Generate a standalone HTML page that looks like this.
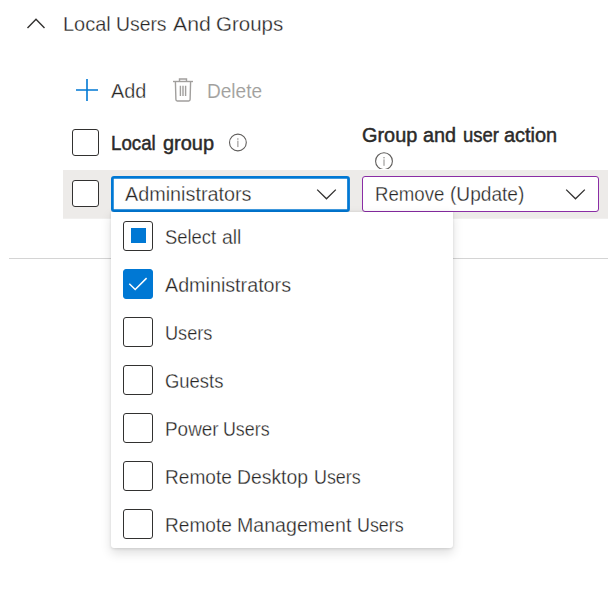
<!DOCTYPE html>
<html>
<head>
<meta charset="utf-8">
<title>Local Users And Groups</title>
<style>
html,body{margin:0;padding:0;background:#fff;}
body{width:608px;height:598px;position:relative;overflow:hidden;font-family:"Liberation Sans",sans-serif;color:#323130;}
.abs{position:absolute;}
.t{position:absolute;white-space:nowrap;transform-origin:0 50%;line-height:1;-webkit-text-stroke:0.3px #fff;color:#262524;}
.w{position:absolute;top:0;transform-origin:0 50%;display:block;}
.cb{position:absolute;box-sizing:border-box;border:1.5px solid #323130;border-radius:3px;background:#fff;}
.hcb{width:27px;height:27px;}
.lcb{width:30px;height:30px;left:123px;}
.row{position:absolute;left:63px;top:170px;width:545px;height:48px;background:#edebe9;border-bottom:1px solid #f1f0ef;}
.dd{position:absolute;box-sizing:border-box;height:36px;top:176px;background:#fff;border-radius:3px;}
.popup{position:absolute;left:111px;top:212px;width:342px;height:336px;background:#fff;border-radius:0 0 3px 3px;box-shadow:0 4.8px 10.8px rgba(0,0,0,.132),0 .9px 2.7px rgba(0,0,0,.108);}
.hr{position:absolute;left:9px;top:257.6px;width:599px;height:1px;background:#d4d4d4;}
.b{font-weight:normal;color:#2b2a29;-webkit-text-stroke:0.45px #2b2a29;}
</style>
</head>
<body>
<!-- title -->
<svg class="abs" style="left:24px;top:13px" width="24" height="20" viewBox="0 0 24 20"><path transform="translate(0,0.1)" d="M3.5 15 L12 6.2 L20.5 15" fill="none" stroke="#323130" stroke-width="1.4"/></svg>
<div class="t" id="title" style="left:62.69px;top:12.7px;font-size:21px;"><span class="w" style="left:0.00px;transform:scaleX(0.9498)">Local</span> <span class="w" style="left:53.43px;transform:scaleX(0.9216)">Users</span> <span class="w" style="left:110.80px;transform:scaleX(1.0102)">And</span> <span class="w" style="left:153.23px;transform:scaleX(0.9751)">Groups</span></div>

<!-- commands -->
<svg class="abs" style="left:74px;top:77px" width="26" height="26" viewBox="0 0 26 26"><path d="M13 2 V24 M2 13 H24" fill="none" stroke="#0078d4" stroke-width="1.6"/></svg>
<div class="t" id="add" style="transform:scaleX(1.02);left:110.77px;top:82px;font-size:19.5px;">Add</div>
<svg class="abs" style="left:170px;top:76px" width="26" height="28" viewBox="0 0 26 28"><g fill="none" stroke="#a19f9d" stroke-width="1.4"><path d="M3 5.5 H23"/><path d="M9.5 5.5 V3 H16.5 V5.5"/><path d="M5.4 5.5 L5.9 23.6 Q5.9 25 7.3 25 H18.7 Q20.1 25 20.1 23.6 L20.6 5.5"/><path d="M10.4 9.7 V20 M13 9.7 V20 M15.6 9.7 V20"/></g></svg>
<div class="t" id="delete" style="transform:scaleX(0.9771);left:206.88px;top:82px;font-size:19.5px;color:#a19f9d;-webkit-text-stroke:0.1px #fff;">Delete</div>

<!-- header -->
<div class="cb hcb" style="left:72px;top:129px;"></div>
<div class="t b" id="lg" style="left:111.60px;top:134px;font-size:19.5px;"><span class="w" style="left:-0.42px;transform:scaleX(0.9595)">Local</span> <span class="w" style="left:51.13px;transform:scaleX(1.0230)">group</span></div>
<svg class="abs" style="left:227px;top:131px" width="22" height="22" viewBox="0.1 -0.5 22 22"><circle cx="11" cy="11" r="8.4" fill="none" stroke="#605e5c" stroke-width="1.1"/><path d="M11 9.2 V15.6" stroke="#8a8886" stroke-width="1"/><circle cx="11" cy="7.6" r="0.75" fill="#8a8886"/></svg>
<div class="t b" id="gua" style="left:362.10px;top:125.6px;font-size:19.5px;"><span class="w" style="left:-0.60px;transform:scaleX(1.0200)">Group</span> <span class="w" style="left:60.72px;transform:scaleX(1.0153)">and</span> <span class="w" style="left:100.46px;transform:scaleX(0.9479)">user</span> <span class="w" style="left:142.15px;transform:scaleX(1.0222)">action</span></div>
<svg class="abs" style="left:373px;top:150px" width="22" height="19" viewBox="0 -0.2 22 19"><circle cx="11" cy="11" r="8.4" fill="none" stroke="#605e5c" stroke-width="1.1"/><path d="M11 9.2 V15.6" stroke="#8a8886" stroke-width="1"/><circle cx="11" cy="7.6" r="0.75" fill="#8a8886"/></svg>

<!-- hr -->
<div class="hr"></div>

<!-- row -->
<div class="row"></div>
<div class="cb hcb" style="left:72px;top:180px;"></div>
<svg class="abs" id="dd1" style="left:111px;top:176px" width="239" height="36" viewBox="0 0 239 36"><rect x="0" y="0" width="238.9" height="36" rx="3" fill="#0078d4"/><rect x="2.75" y="2.75" width="233.4" height="30.5" fill="#fff"/></svg>
<div class="t" id="dd1t" style="transform:scaleX(1.0150);left:125.19px;top:185px;font-size:19.5px;">Administrators</div>
<svg class="abs" style="left:315px;top:186px" width="24" height="18" viewBox="0.5 0.6 24 18"><path d="M2.7 4.2 L12 13.4 L21.3 4.2" fill="none" stroke="#323130" stroke-width="1.3"/></svg>
<div class="dd" id="dd2" style="left:361.6px;width:237.3px;border:1.5px solid #8a2da5;"></div>
<div class="t" id="dd2t" style="left:375.35px;top:185px;font-size:19.5px;"><span class="w" style="left:0.00px;transform:scaleX(0.9563)">Remove</span> <span class="w" style="left:74.75px;transform:scaleX(0.9792)">(Update)</span></div>
<svg class="abs" style="left:564px;top:186px" width="24" height="18" viewBox="0.5 0.6 24 18"><path d="M2.7 4.2 L12 13.4 L21.3 4.2" fill="none" stroke="#323130" stroke-width="1.3"/></svg>

<!-- popup -->
<div class="popup"></div>
<div class="cb lcb" style="top:221px;"></div>
<div class="abs" style="left:131px;top:228px;width:15px;height:15px;background:#0078d4;"></div>
<div class="t" id="i1" style="left:165.28px;top:228px;font-size:19.5px;"><span class="w" style="left:0.00px;transform:scaleX(0.9426)">Select</span> <span class="w" style="left:56.43px;transform:scaleX(0.9924)">all</span></div>

<div class="cb lcb" style="top:269px;background:#0078d4;border-color:#0078d4;"></div>
<svg class="abs" style="left:123px;top:269px" width="30" height="30" viewBox="0 0 30 30"><path d="M6.3 14.7 L12.2 20.5 L23.6 9.1" fill="none" stroke="#fff" stroke-width="1.5"/></svg>
<div class="t" id="i2" style="transform:scaleX(1.0111);left:165.20px;top:276px;font-size:19.5px;">Administrators</div>

<div class="cb lcb" style="top:317px;"></div>
<div class="t" id="i3" style="transform:scaleX(0.9311);left:164.90px;top:324px;font-size:19.5px;">Users</div>
<div class="cb lcb" style="top:365px;"></div>
<div class="t" id="i4" style="transform:scaleX(0.9456);left:164.63px;top:372px;font-size:19.5px;">Guests</div>
<div class="cb lcb" style="top:413px;"></div>
<div class="t" id="i5" style="left:164.91px;top:420px;font-size:19.5px;"><span class="w" style="left:0.00px;transform:scaleX(0.9700)">Power</span> <span class="w" style="left:57.75px;transform:scaleX(0.9142)">Users</span></div>
<div class="cb lcb" style="top:461px;"></div>
<div class="t" id="i6" style="left:165.15px;top:468px;font-size:19.5px;"><span class="w" style="left:0.00px;transform:scaleX(0.9793)">Remote</span> <span class="w" style="left:72.18px;transform:scaleX(0.9924)">Desktop</span> <span class="w" style="left:148.50px;transform:scaleX(0.9170)">Users</span></div>
<div class="cb lcb" style="top:509px;"></div>
<div class="t" id="i7" style="left:165.10px;top:516px;font-size:19.5px;"><span class="w" style="left:0.00px;transform:scaleX(0.9793)">Remote</span> <span class="w" style="left:72.18px;transform:scaleX(1.0047)">Management</span> <span class="w" style="left:191.86px;transform:scaleX(0.9170)">Users</span></div>
</body>
</html>
